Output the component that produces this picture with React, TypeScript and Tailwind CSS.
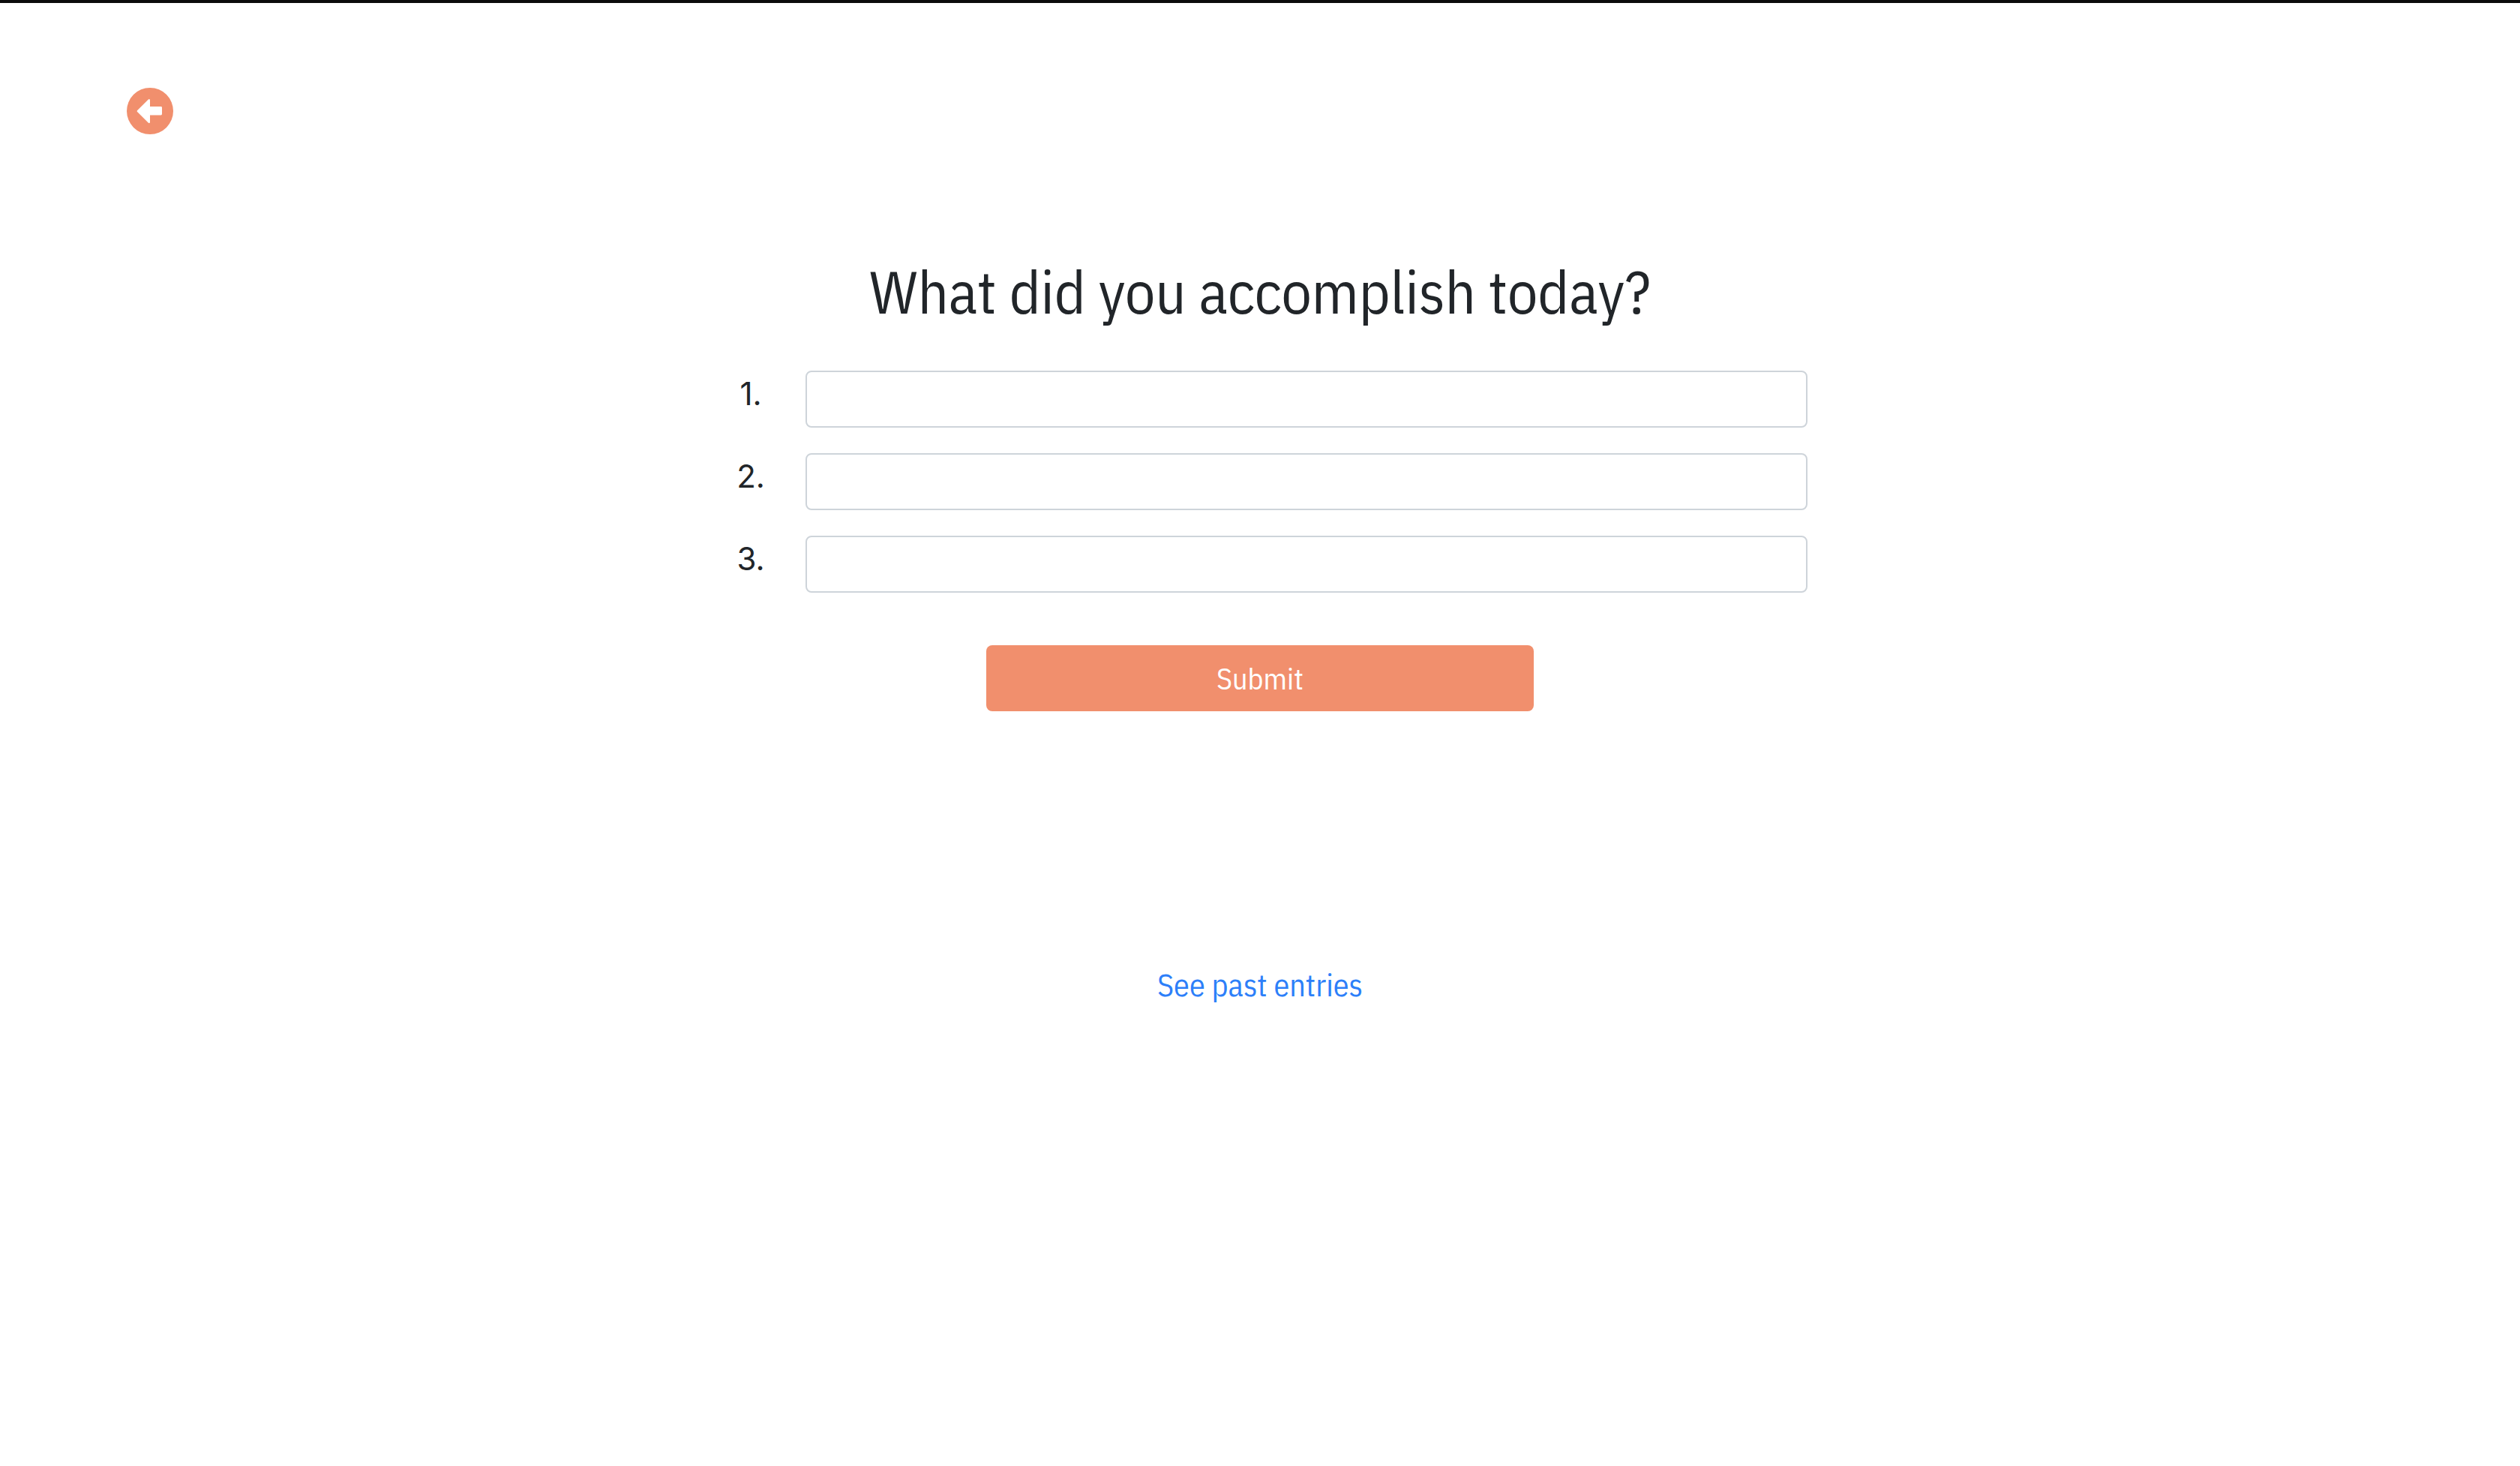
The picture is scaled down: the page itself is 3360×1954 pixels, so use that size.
import React from "react";

const entries = [1, 2, 3];

export default function App() {
  return (
    <div className="min-h-screen border-t-4 border-[#0c0c0c] bg-white font-['IBM_Plex_Sans_Condensed','Roboto_Condensed','Liberation_Sans_Narrow',Roboto,sans-serif] text-[#212529]">
      <header className="px-[169px] pt-[113px]">
        <a href="#back" aria-label="Back" className="block size-[62px]">
          <svg viewBox="0 0 62 62" className="size-full" aria-hidden="true">
            <circle cx="31" cy="31" r="31" fill="#f18f6d" />
            <path
              d="M14 30.2 28.6 15.7Q30.9 14 31 16.8V25H45.6Q47 25 47 26.4V35Q47 36.4 45.6 36.4H31V45.4Q30.9 48.2 28.6 46.5L14 32Q13.2 31.1 14 30.2Z"
              fill="white"
            />
          </svg>
        </a>
      </header>

      <main className="mx-auto flex w-full max-w-[1460px] flex-col items-center pt-[161px]">
        <h1 className="text-[80px] leading-[96px]">What did you accomplish today?</h1>

        <form className="mt-[58px] flex w-full flex-col items-center" onSubmit={(e) => e.preventDefault()}>
          <div className="flex w-full flex-col gap-[34px]">
            {entries.map((n) => (
              <div key={n} className="flex gap-[22px]">
                <label
                  htmlFor={`entry-${n}`}
                  className="w-[102px] text-center font-[Inter,sans-serif] text-[42px] leading-[62px]"
                >
                  {n}.
                </label>
                <input
                  id={`entry-${n}`}
                  type="text"
                  className="h-[76px] min-w-0 flex-1 rounded-lg border-2 border-[#ced4da] bg-white px-6 text-[32px]"
                />
              </div>
            ))}
          </div>
          <button type="submit" className="mt-[70px] h-[88px] w-1/2 rounded-lg bg-[#f18f6d] text-[40px] text-white">
            Submit
          </button>
        </form>

        <a href="#entries" className="mt-[335px] text-[42px] leading-[60px] text-[#2d7ff9]">
          See past entries
        </a>
      </main>
    </div>
  );
}
